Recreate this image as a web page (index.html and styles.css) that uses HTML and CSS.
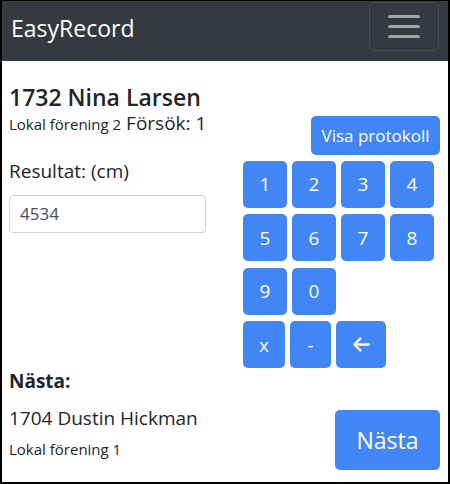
FILE: index.html
```html
<!DOCTYPE html>
<html lang="sv">
<head>
<meta charset="utf-8">
<title>EasyRecord</title>
<link rel="stylesheet" href="styles.css">
</head>
<body>
<div class="page">
  <nav class="navbar">
    <span class="brand">EasyRecord</span>
    <button class="toggler" type="button" aria-label="Meny">
      <svg width="32" height="24" viewBox="0 0 32 24"><path d="M1.5 2.5h29M1.5 12.5h29M1.5 22.5h29" stroke="rgba(255,255,255,0.55)" stroke-width="3" stroke-linecap="round" fill="none"/></svg>
    </button>
  </nav>
  <main class="content">
    <section class="athlete">
      <div class="athlete-info">
        <h4 class="athlete-name">1732 Nina Larsen</h4>
        <div class="athlete-sub"><span class="club">Lokal förening 2</span> Försök: 1</div>
      </div>
      <button class="btn btn-protocol" type="button">Visa protokoll</button>
    </section>
    <section class="entry">
      <div class="entry-left">
        <label class="result-label" for="result">Resultat: (cm)</label>
        <input id="result" class="result-input" type="text" value="4534">
      </div>
      <div class="keypad">
        <div class="key-row">
          <button class="btn key" type="button">1</button>
          <button class="btn key" type="button">2</button>
          <button class="btn key" type="button">3</button>
          <button class="btn key" type="button">4</button>
        </div>
        <div class="key-row">
          <button class="btn key" type="button">5</button>
          <button class="btn key" type="button">6</button>
          <button class="btn key" type="button">7</button>
          <button class="btn key" type="button">8</button>
        </div>
        <div class="key-row">
          <button class="btn key" type="button">9</button>
          <button class="btn key" type="button">0</button>
        </div>
        <div class="key-row">
          <button class="btn key key-x" type="button">x</button>
          <button class="btn key key-dash" type="button">-</button>
          <button class="btn key key-back" type="button" aria-label="Radera">
            <svg width="17" height="19" viewBox="0 0 448 512"><path fill="#fff" d="M9.4 233.4c-12.5 12.5-12.5 32.8 0 45.3l160 160c12.5 12.5 32.8 12.5 45.3 0s12.5-32.8 0-45.3L109.2 288H416c17.7 0 32-14.3 32-32s-14.3-32-32-32H109.3L214.6 118.6c12.5-12.5 12.5-32.8 0-45.3s-32.8-12.5-45.3 0l-160 160z"/></svg>
          </button>
        </div>
      </div>
    </section>
    <section class="next">
      <div class="next-label">Nästa:</div>
      <div class="next-row">
        <div class="next-info">
          <div class="next-name">1704 Dustin Hickman</div>
          <div class="next-club">Lokal förening 1</div>
        </div>
        <button class="btn btn-next" type="button">Nästa</button>
      </div>
    </section>
  </main>
</div>
</body>
</html>
```
FILE: styles.css
```css
* { box-sizing: border-box; }
html, body { margin: 0; padding: 0; background: #fff; }
body {
  font-family: "Open Sans", "Noto Sans", sans-serif;
  color: #212529;
}
.page {
  width: 450px;
  height: 484px;
  border: 2px solid #000;
  border-top-width: 1px;
  overflow: hidden;
  display: flex;
  flex-direction: column;
}
.navbar {
  height: 60px;
  background: #343a40;
  display: flex;
  justify-content: space-between;
  align-items: flex-start;
  flex-shrink: 0;
}
.brand {
  margin: 12px 0 0 9px;
  font-size: 23px;
  line-height: 30px;
  color: #fff;
}
.toggler {
  margin: 1px 9px 0 0;
  width: 70px;
  height: 49px;
  padding: 0;
  background: transparent;
  border: 1px solid rgba(255,255,255,0.1);
  border-radius: 6px;
  display: flex;
  align-items: center;
  justify-content: center;
}
.toggler svg { display: block; margin-top: -2px; }
.content {
  padding: 23px 8px 0 7px;
  flex: 1;
}
.btn {
  font-family: "Open Sans", "Noto Sans", sans-serif;
  background: #4285f4;
  color: #fff;
  border: 0;
  border-radius: 5px;
  padding: 0;
  display: flex;
  align-items: center;
  justify-content: center;
}
.athlete {
  display: flex;
  justify-content: space-between;
  align-items: flex-start;
}
.athlete-name {
  margin: 0;
  font-size: 23px;
  font-weight: 600;
  line-height: 26px;
}
.athlete-sub {
  margin-top: 1px;
  font-size: 19px;
  line-height: 24px;
}
.club { font-size: 15px; line-height: 1; }
.btn-protocol {
  margin-top: 31.5px;
  height: 39px;
  width: 129px;
  font-size: 17px;
}
.entry {
  display: flex;
  align-items: flex-start;
}
.entry-left {
  width: 234px;
  display: flex;
  flex-direction: column;
  align-items: flex-start;
}
.result-label {
  margin-top: 4px;
  font-size: 19px;
  line-height: 24px;
}
.result-input {
  margin-top: 12px;
  width: 197px;
  height: 38px;
  padding: 0 10px;
  border: 1px solid #ced4da;
  border-radius: 4px;
  font-family: "Open Sans", "Noto Sans", sans-serif;
  font-size: 17px;
  color: #495057;
  outline: none;
}
.keypad {
  margin-top: 6px;
  display: flex;
  flex-direction: column;
  gap: 6.5px;
}
.key-row {
  display: flex;
  gap: 5px;
}
.key {
  width: 44px;
  height: 47px;
  font-size: 19px;
}
.key-x { width: 42px; }
.key-dash { width: 41px; }
.key-back { width: 50px; }
.next-label {
  margin-top: 1px;
  font-size: 19px;
  font-weight: 700;
  line-height: 24px;
}
.next-row {
  display: flex;
  justify-content: space-between;
  align-items: flex-start;
}
.next-info { margin-top: 13px; }
.next-name {
  font-size: 19px;
  line-height: 24px;
}
.next-club {
  margin-top: 9px;
  font-size: 15px;
  line-height: 20px;
}
.btn-next {
  margin-top: 16.5px;
  width: 105px;
  height: 60px;
  font-size: 23px;
}
```
